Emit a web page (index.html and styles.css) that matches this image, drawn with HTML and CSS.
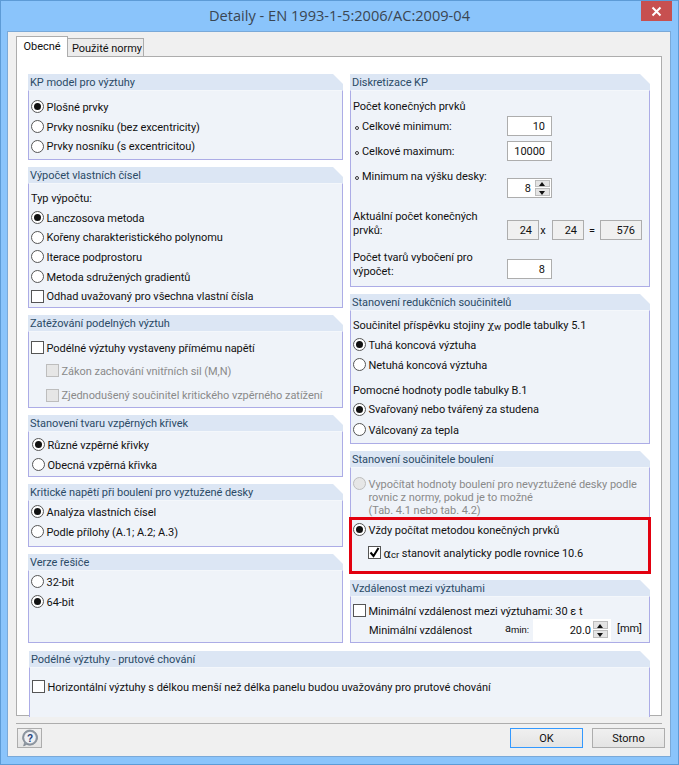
FILE: index.html
```html
<!DOCTYPE html>
<html lang="cs">
<head>
<meta charset="utf-8">
<title>Detaily</title>
<link rel="stylesheet" href="styles.css">
</head>
<body>
<div class="window">
  <div class="titlebar">
    <div class="title">Detaily - EN 1993-1-5:2006/AC:2009-04</div>
    <div class="close"><svg width="11" height="11" viewBox="0 0 11 11"><path d="M1.5 1.5l8 8M9.5 1.5l-8 8" stroke="#fff" stroke-width="2" fill="none"/></svg></div>
  </div>
  <div class="client">
    <div class="tabs">
      <div class="tab active">Obecné</div>
      <div class="tab">Použité normy</div>
    </div>
    <div class="panel">
      <div class="columns">
        <div class="col col-left">
          <section class="group h86">
            <h2 class="ghead">KP model pro výztuhy</h2>
            <div class="gbody pt6">
              <div class="row"><span class="radio on"></span>Plošné prvky</div>
              <div class="row"><span class="radio"></span>Prvky nosníku (bez excentricity)</div>
              <div class="row"><span class="radio"></span>Prvky nosníku (s excentricitou)</div>
            </div>
          </section>
          <section class="group h141">
            <h2 class="ghead">Výpočet vlastních čísel</h2>
            <div class="gbody pt4">
              <div class="row">Typ výpočtu:</div>
              <div class="row"><span class="radio on"></span>Lanczosova metoda</div>
              <div class="row"><span class="radio"></span>Kořeny charakteristického polynomu</div>
              <div class="row"><span class="radio"></span>Iterace podprostoru</div>
              <div class="row"><span class="radio"></span>Metoda sdružených gradientů</div>
              <div class="row"><span class="check"></span>Odhad uvažovaný pro všechna vlastní čísla</div>
            </div>
          </section>
          <section class="group h93">
            <h2 class="ghead">Zatěžování podelných výztuh</h2>
            <div class="gbody pt6">
              <div class="row"><span class="check"></span>Podélné výztuhy vystaveny přímému napětí</div>
              <div class="row row-sub off tall first"><span class="check dis"></span>Zákon zachování vnitřních sil (M,N)</div>
              <div class="row row-sub off tall"><span class="check dis"></span>Zjednodušený součinitel kritického vzpěrného zatížení</div>
            </div>
          </section>
          <section class="group h62">
            <h2 class="ghead">Stanovení tvaru vzpěrných křivek</h2>
            <div class="gbody pt3 indent1">
              <div class="row"><span class="radio on"></span>Různé vzpěrné křivky</div>
              <div class="row"><span class="radio"></span>Obecná vzpěrná křivka</div>
            </div>
          </section>
          <section class="group h63">
            <h2 class="ghead">Kritické napětí při boulení pro vyztužené desky</h2>
            <div class="gbody pt1">
              <div class="row"><span class="radio on"></span>Analýza vlastních čísel</div>
              <div class="row"><span class="radio"></span>Podle přílohy (A.1; A.2; A.3)</div>
            </div>
          </section>
          <section class="group h89">
            <h2 class="ghead">Verze řešiče</h2>
            <div class="gbody pt1">
              <div class="row"><span class="radio"></span>32-bit</div>
              <div class="row"><span class="radio on"></span>64-bit</div>
            </div>
          </section>
        </div>
        <div class="col col-right">
          <section class="group h213">
            <h2 class="ghead">Diskretizace KP</h2>
            <div class="gbody pt5">
              <div class="row">Počet konečných prvků</div>
              <div class="frow f1"><span class="flabel"><span class="bullet"></span>Celkové minimum:</span><span class="field">10</span></div>
              <div class="frow f2"><span class="flabel"><span class="bullet"></span>Celkové maximum:</span><span class="field">10000</span></div>
              <div class="frow f3"><span class="flabel raised"><span class="bullet"></span>Minimum na výšku desky:</span>
                <span class="field spinfield">8<span class="spin"><span class="up"></span><span class="down"></span></span></span></div>
              <div class="frow f4"><span class="flabel wrap">Aktuální počet konečných prvků:</span>
                <span class="field ro w32">24</span><span class="op opx">x</span><span class="field ro w32">24</span><span class="op opeq">=</span><span class="field ro w42">576</span></div>
              <div class="frow f5"><span class="flabel wrap">Počet tvarů vybočení pro výpočet:</span><span class="field">8</span></div>
            </div>
          </section>
          <section class="group h150">
            <h2 class="ghead">Stanovení redukčních součinitelů</h2>
            <div class="gbody pt4">
              <div class="row">Součinitel příspěvku stojiny&nbsp;<i class="greek">χ</i><span class="sub">w</span>&nbsp;podle tabulky 5.1</div>
              <div class="row"><span class="radio on"></span>Tuhá koncová výztuha</div>
              <div class="row r21"><span class="radio"></span>Netuhá koncová výztuha</div>
              <div class="row r25">Pomocné hodnoty podle tabulky B.1</div>
              <div class="row"><span class="radio on"></span>Svařovaný nebo tvářený za studena</div>
              <div class="row r21"><span class="radio"></span>Válcovaný za tepla</div>
            </div>
          </section>
          <section class="group h122">
            <h2 class="ghead">Stanovení součinitele boulení</h2>
            <div class="gbody pt9">
              <div class="row para off"><span class="radio dis"></span><span>Vypočítat hodnoty boulení pro nevyztužené desky podle<br>rovnic z normy, pokud je to možné<br>(Tab. 4.1 nebo tab. 4.2)</span></div>
              <div class="row"><span class="radio on"></span>Vždy počítat metodou konečných prvků</div>
              <div class="row row-sub r26"><span class="check checked"><svg width="11" height="11" viewBox="0 0 11 11"><path d="M1.5 5.5l3 3.5 5-8" stroke="#000" stroke-width="2" fill="none"/></svg></span><span class="greek-a">α</span><span class="sub">cr</span>&nbsp;stanovit analyticky podle rovnice 10.6</div>
            </div>
            <div class="highlight"></div>
          </section>
          <section class="group h63">
            <h2 class="ghead">Vzdálenost mezi výztuhami</h2>
            <div class="gbody pt4">
              <div class="row r19"><span class="check"></span>Minimální vzdálenost mezi výztuhami: 30 ε t</div>
              <div class="minrow">
                <span class="minlabel">Minimální vzdálenost</span>
                <span class="amin">a<span class="sub">min:</span></span>
                <span class="minfield">20.0<span class="spin"><span class="up"></span><span class="down"></span></span></span>
                <span class="unit">[mm]</span>
              </div>
            </div>
          </section>
        </div>
      </div>
      <section class="group wide">
        <h2 class="ghead">Podélné výztuhy - prutové chování</h2>
        <div class="gbody pt9b noborder">
          <div class="row"><span class="check"></span>Horizontální výztuhy s délkou menší než délka panelu budou uvažovány pro prutové chování</div>
        </div>
      </section>
    </div>
    <div class="footer">
      <button class="btn help" type="button" aria-label="Nápověda">
        <svg width="18" height="18" viewBox="0 0 18 18"><path d="M9 1a7.6 7.6 0 1 1-3.4 14.4L2.6 17l.9-3.3A7.6 7.6 0 0 1 9 1z" fill="#8f98a3" stroke="#757d88" stroke-width=".6"/><circle cx="9" cy="8.6" r="5.8" fill="#eef0f4"/><text x="9" y="12.8" text-anchor="middle" class="helpq">?</text></svg>
      </button>
      <span class="spacer"></span>
      <button class="btn primary" type="button">OK</button>
      <button class="btn" type="button">Storno</button>
    </div>
  </div>
</div>
</body>
</html>
```

FILE: styles.css
```css
* { box-sizing: border-box; }
html, body { margin: 0; padding: 0; background: #8bc5fa; }
body { width: 679px; height: 765px; overflow: hidden; font: 11px/16px Roboto, "Liberation Sans", sans-serif; letter-spacing: -0.04px; color: #111; }
.window { width: 679px; height: 765px; background: #8ac4fb; border: 1px solid #5d9bd6; display: flex; flex-direction: column; }
.titlebar { height: 30px; flex: none; display: flex; justify-content: center; position: relative; }
.title { font: 14.6px/28px "Open Sans", "Noto Sans", sans-serif; letter-spacing: 0; color: #3a4652; }
.close { position: absolute; right: 6px; top: 0; width: 31px; height: 20px; background: #c75050; display: flex; align-items: center; justify-content: center; }
.client { flex: none; width: 664px; height: 726px; margin-left: 6px; background: #f0f0f0; border: 1px solid #7aa9d8; padding: 4px 0 0 8px; display: flex; flex-direction: column; }

.tabs { display: flex; align-items: flex-end; height: 20px; flex: none; }
.tab { height: 18px; padding: 0 4px; width: 76px; background: #ececec; border: 1px solid #adadad; border-bottom: none; border-left: none; line-height: 19px; text-align: center; white-space: nowrap; }
.tab.active { height: 21px; width: 52px; background: #fff; border-left: 1px solid #adadad; position: relative; top: 1px; z-index: 1; line-height: 20px; }

.panel { width: 646px; height: 660px; flex: none; background: #fff; border: 1px solid #adadad; padding: 17px 0 0 11px; }
.columns { display: flex; gap: 7px; }
.col { display: flex; flex-direction: column; gap: 7px; }
.col-left { width: 315px; }
.col-right { width: 300px; }

.group { position: relative; display: flex; flex-direction: column; }
.h86 { height: 86px; } .h141 { height: 141px; } .h93 { height: 93px; } .h62 { height: 62px; }
.h63 { height: 63px; } .h89 { height: 89px; } .h213 { height: 213px; } .h150 { height: 150px; } .h122 { height: 122px; }
.wide { width: 621px; height: 66px; margin: 8px 0 0 1px; }

.ghead { margin: 0; height: 16px; flex: none; padding: 1px 0 0 2px; background: #dce6f4; font: inherit; line-height: 16px; color: #2b4a66; clip-path: polygon(0 0, calc(100% - 10px) 0, 100% 10px, 100% 100%, 0 100%); white-space: nowrap; }
.gbody { flex: 1; background: #eff3f9; border: 1px solid #acace6; border-top: 1px solid #f4f7fb; padding-left: 2px; min-height: 0; }
.noborder { border-bottom: none; }
.pt1 { padding-top: 1px; } .pt3 { padding-top: 3px; } .pt4 { padding-top: 4px; } .pt5 { padding-top: 5px; } .pt6 { padding-top: 6px; } .pt9 { padding-top: 8.5px; } .pt9b { padding-top: 9px; }
.indent1 { padding-left: 3px; }

.row { display: flex; align-items: center; height: 19.7px; padding-top: 2px; white-space: nowrap; }
.row-sub { padding-left: 15px; }
.tall { height: 24.5px; }
.first { margin-top: 1px; }
.r21 { height: 21px; } .r25 { height: 19px; margin-top: 5px; } .r26 { height: 26px; } .r19 { height: 19px; }
.off { color: #8a8a8a; }
.para { height: 43.5px; padding-top: 1px; align-items: flex-start; line-height: 13px; }
.para .radio { margin: -1px 2.5px 0 0; }

.radio { width: 13px; height: 13px; flex: none; margin: 0 2.5px 2px 0; border: 1px solid #555; border-radius: 50%; background: #fff; position: relative; }
.radio.on::after { content: ""; position: absolute; left: 2px; top: 2px; width: 7px; height: 7px; background: #111; border-radius: 50%; }
.radio.dis { background: #e6e6e6; border-color: #bdbdbd; }
.check { width: 13px; height: 13px; flex: none; margin: 0 2.5px 2px 0; border: 1px solid #555; background: #fff; display: flex; align-items: center; justify-content: center; }
.check.dis { background: #e6e6e6; border-color: #bdbdbd; }

.frow { display: flex; align-items: flex-start; height: 20px; }
.flabel { width: 154px; height: 20px; padding-top: 3px; flex: none; display: flex; align-items: center; white-space: nowrap; }
.flabel.wrap { display: block; padding-top: 0; white-space: normal; line-height: 14px; width: 145px; margin-right: 9px; height: 28px; }
.flabel.raised { margin-top: -12px; }
.bullet { width: 4px; height: 4px; border: 1px solid #333; border-radius: 50%; margin: 1px 3px 0 2px; flex: none; }
.f1 { margin-top: 0.3px; } .f2 { margin-top: 5px; } .f3 { margin-top: 17px; } .f4 { margin-top: 22px; } .f5 { margin-top: 19px; }
.f4 .flabel { margin-top: -10px; }
.f5 .flabel { margin-top: -8px; }
.field { width: 45px; height: 20px; flex: none; background: #fff; border: 1px solid #adadad; text-align: right; padding-right: 6px; line-height: 20px; position: relative; }
.ro { background: #f0f0f0; }
.w32 { width: 32px; } .w42 { width: 42px; }
.op { flex: none; text-align: center; line-height: 22px; }
.opx { width: 13px; padding-right: 5px; } .opeq { width: 16px; }
.spinfield { padding-right: 20px; }
.spin { position: absolute; right: 1px; top: 1px; width: 15px; height: 16px; display: flex; flex-direction: column; gap: 1px; }
.spin .up, .spin .down { flex: 1; background: #e4e4e4; border: 1px solid #bdbdbd; position: relative; }
.spin .up::after, .spin .down::after { content: ""; position: absolute; left: 3px; border-left: 3.5px solid transparent; border-right: 3.5px solid transparent; }
.spin .up::after { top: 1.5px; border-bottom: 4px solid #111; }
.spin .down::after { top: 1.5px; border-top: 4px solid #111; }

.sub { font-size: 9.5px; position: relative; top: 1.5px; }
.greek { font-style: normal; font-family: "DejaVu Serif", serif; }
.greek-a { font-family: "DejaVu Sans", sans-serif; font-size: 11.5px; }

.highlight { position: absolute; left: -1px; right: -1px; top: 66px; bottom: -1px; border: 3px solid #e2000f; pointer-events: none; }

.minrow { display: flex; align-items: center; height: 22px; margin-top: -1px; }
.minlabel { width: 152px; padding: 2px 0 0 16px; flex: none; white-space: nowrap; }
.amin { width: 28px; flex: none; white-space: nowrap; margin-top: -3px; }
.minfield { width: 78px; height: 22px; flex: none; background: #fff; text-align: right; padding-right: 20px; line-height: 24px; position: relative; }
.minfield .spin { right: 3px; top: 2px; height: 17px; }
.unit { margin-left: 6px; margin-top: -3px; }

.footer { height: 41px; margin-top: 7px; border-top: 1px solid #adadad; display: flex; align-items: flex-start; padding-top: 4px; width: 646px; flex: none; }
.spacer { flex: 1; }
.btn { width: 73px; height: 20px; background: linear-gradient(#f0f0f0, #e4e4e4); border: 1px solid #adadad; font: inherit; color: #111; padding: 2px 0 0; line-height: 16px; flex: none; }
.btn + .btn { margin-left: 9px; }
.btn.primary { border-color: #3399ff; }
.help { width: 25px; margin-left: 1px; padding: 0; display: flex; align-items: center; justify-content: center; }
.help + .spacer + .btn + .btn { margin-right: -3px; }
.helpq { font: bold 10px "Liberation Sans", sans-serif; fill: #23407a; }
```
